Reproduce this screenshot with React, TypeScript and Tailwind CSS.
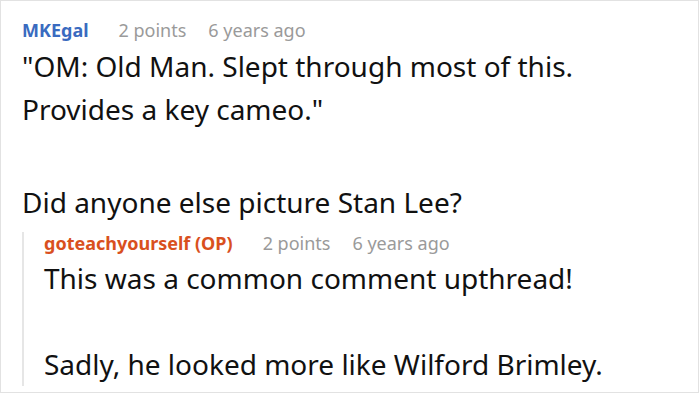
const font = { fontFamily: '"Noto Sans", "Open Sans", sans-serif' }

function Meta({ name, color }: { name: string; color: string }) {
	return (
		<div className="flex items-baseline text-[18px] leading-[22px]">
			<span className={`font-bold ${color} mr-[30px]`}>{name}</span>
			<span className="text-[#9a9a9a] mr-[22px]">2 points</span>
			<span className="text-[#9a9a9a]">6 years ago</span>
		</div>
	)
}

export default function App() {
	return (
		<div className="w-[700px] h-[394px] bg-white" style={font}>
			<div className="w-[699px] h-[393px] border border-[#e2e2e2] pl-[21px] pt-[18px] text-[#111111]">
				<Meta name="MKEgal" color="text-[#3a6bc0]" />
				<div className="text-[28px] leading-[43px] mt-[4px]">
					<p>"OM: Old Man. Slept through most of this.</p>
					<p>Provides a key cameo."</p>
					<p className="mt-[50px]">Did anyone else picture Stan Lee?</p>
				</div>
				<div className="mt-[8px] border-l-2 border-[#e6e6e6] pl-[20px]">
					<Meta name="goteachyourself (OP)" color="text-[#d9501e]" />
					<div className="text-[28px] leading-[43px] mt-[3px]">
						<p>This was a common comment upthread!</p>
						<p className="mt-[43px]">Sadly, he looked more like Wilford Brimley.</p>
					</div>
				</div>
			</div>
		</div>
	)
}
